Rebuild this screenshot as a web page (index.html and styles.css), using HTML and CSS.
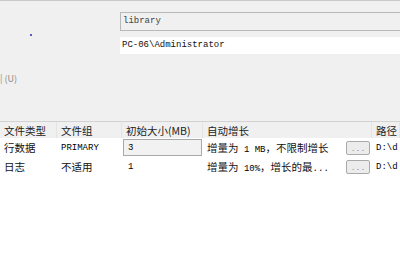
FILE: index.html
```html
<!DOCTYPE html>
<html lang="zh-CN">
<head>
    <meta charset="UTF-8">
    <title>数据库属性 - 文件</title>
    <link rel="stylesheet" href="styles.css">
</head>
<body>
    <div class="top">
        <div class="field-row first">
            <div class="label"></div>
            <div class="field disabled">library</div>
        </div>
        <div class="field-row">
            <div class="label"><span class="dot"></span></div>
            <div class="field plain">PC-06\Administrator</div>
        </div>
        <div class="hint">| (U)</div>
    </div>

    <div class="grid">
        <div class="row head">
            <div class="cell">文件类型</div>
            <div class="cell">文件组</div>
            <div class="cell">初始大小(MB)</div>
            <div class="cell">自动增长</div>
            <div class="cell">路径</div>
        </div>
        <div class="row">
            <div class="cell">行数据</div>
            <div class="cell mono">PRIMARY</div>
            <div class="cell edit"><span class="box mono">3</span></div>
            <div class="cell grow">
                <span>增量为<span class="mono"> 1 MB</span>，不限制增长</span>
                <span class="btn">...</span>
            </div>
            <div class="cell mono">D:\d</div>
        </div>
        <div class="row">
            <div class="cell">日志</div>
            <div class="cell">不适用</div>
            <div class="cell mono num">1</div>
            <div class="cell grow">
                <span>增量为<span class="mono"> 10%</span>，增长的最<span class="mono">...</span></span>
                <span class="btn">...</span>
            </div>
            <div class="cell mono">D:\d</div>
        </div>
    </div>
</body>
</html>
```

FILE: styles.css
```css
body {
    margin: 0;
    background-color: #fff;
    font-family: "Noto Sans CJK SC", "Liberation Sans", sans-serif;
    font-size: 10.5px;
    color: #111;
    overflow: hidden;
}

.top {
    height: 122px;
    box-sizing: border-box;
    background-color: #f0f0f0;
    border-top: 1px solid #c8c8c8;
    border-bottom: 1px solid #d2d2d2;
}

.field-row {
    display: flex;
    margin-top: 6px;
}

.field-row.first {
    margin-top: 11px;
}

.label {
    width: 120px;
    flex: none;
}

.dot {
    display: block;
    width: 2px;
    height: 2px;
    margin: 0 0 0 30px;
    background-color: #5a5ad0;
    position: relative;
    top: -3px;
}

.field {
    flex: 1;
    box-sizing: border-box;
    padding-left: 2px;
    font-family: "Liberation Mono", monospace;
    font-size: 9px;
    color: #111;
}

.field.disabled {
    height: 19px;
    line-height: 17px;
    border: 1px solid #b8b8b8;
    border-right: none;
    background-color: #f0f0f0;
    color: #444;
}

.field.plain {
    height: 17px;
    line-height: 17px;
    background-color: #fff;
}

.hint {
    margin-top: 18px;
    font-size: 9px;
    color: #8a8a8a;
}

.row {
    display: grid;
    grid-template-columns: 57px 65px 81px 169px 1fr;
    height: 19px;
    align-items: center;
}

.row.head {
    height: 16px;
    background-color: #f0f0f0;
    color: #222;
}

.row.head .cell {
    border-right: 1px solid #e4e4e4;
}

.cell {
    height: 100%;
    display: flex;
    align-items: center;
    padding-left: 4px;
    box-sizing: border-box;
    white-space: nowrap;
    overflow: hidden;
}

.mono {
    font-family: "Liberation Mono", monospace;
    font-size: 9px;
    color: #000;
}

.edit {
    padding: 1px;
}

.box {
    display: flex;
    align-items: center;
    width: 100%;
    height: 100%;
    box-sizing: border-box;
    padding-left: 4px;
    border: 1px solid #a8a8a8;
    background-color: #f2f2f2;
}

.num {
    padding-left: 6px;
}

.grow {
    justify-content: space-between;
    padding-right: 2px;
}

.btn {
    width: 24px;
    height: 14px;
    box-sizing: border-box;
    border: 1px solid #a9a9a9;
    border-radius: 2px;
    background-color: #ececec;
    color: #888;
    font-family: "Liberation Mono", monospace;
    font-size: 8px;
    line-height: 14px;
    text-align: center;
}
```
